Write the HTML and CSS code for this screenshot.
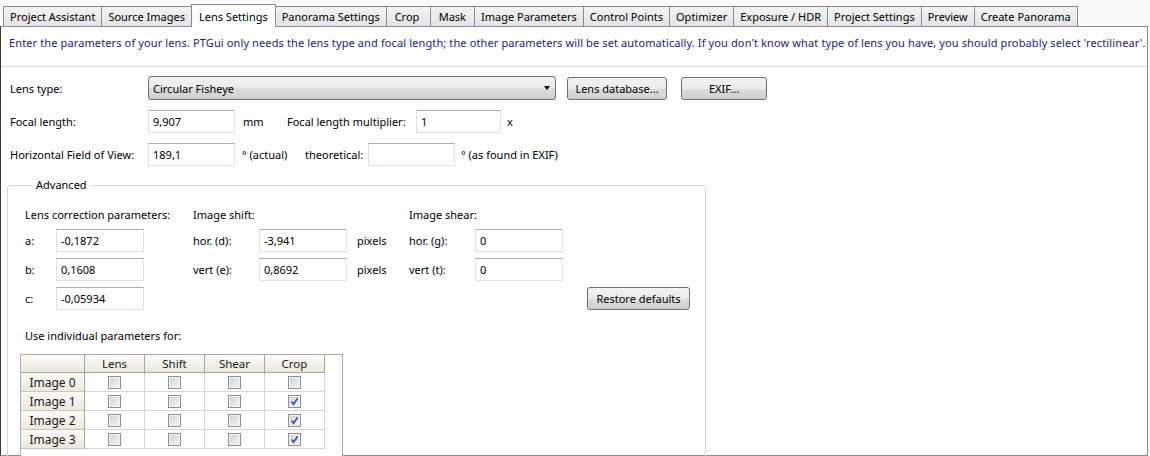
FILE: index.html
```html
<html>
<head>
<meta charset="utf-8">
<link rel="stylesheet" href="styles.css">
</head>
<body>

<div class="tabs">
  <div class="tab">Project Assistant</div>
  <div class="tab">Source Images</div>
  <div class="tab active">Lens Settings</div>
  <div class="tab">Panorama Settings</div>
  <div class="tab small">Crop</div>
  <div class="tab small">Mask</div>
  <div class="tab">Image Parameters</div>
  <div class="tab">Control Points</div>
  <div class="tab">Optimizer</div>
  <div class="tab">Exposure / HDR</div>
  <div class="tab">Project Settings</div>
  <div class="tab">Preview</div>
  <div class="tab">Create Panorama</div>
</div>

<div class="panel">
  <p class="intro">Enter the parameters of your lens. PTGui only needs the lens type and focal length; the other parameters will be set automatically. If you don't know what type of lens you have, you should probably select 'rectilinear'.</p>

  <div class="form">
    <div class="row first">
      <span class="lbl">Lens type:</span>
      <div class="select">
        <span>Circular Fisheye</span>
        <span class="arrow"></span>
      </div>
      <button class="btn lensdb">Lens database...</button>
      <button class="btn exif">EXIF...</button>
    </div>
    <div class="row">
      <span class="lbl">Focal length:</span>
      <input class="field" value="9,907">
      <span class="unit mm">mm</span>
      <span class="multlbl">Focal length multiplier:</span>
      <input class="field short" value="1">
      <span class="unit x">x</span>
    </div>
    <div class="row">
      <span class="lbl">Horizontal Field of View:</span>
      <input class="field" value="189,1">
      <span class="unit actual">° (actual)</span>
      <span class="theolbl">theoretical:</span>
      <input class="field" value="">
      <span class="unit x">° (as found in EXIF)</span>
    </div>
  </div>

  <fieldset class="advanced">
    <legend>Advanced</legend>

    <div class="params">
      <span class="head lenshead">Lens correction parameters:</span>
      <span class="head shifthead">Image shift:</span>
      <span class="head shearhead">Image shear:</span>

      <span>a:</span>
      <input class="field wide" value="-0,1872">
      <span></span>
      <span>hor. (d):</span>
      <input class="field wide" value="-3,941">
      <span class="pix">pixels</span>
      <span>hor. (g):</span>
      <input class="field wide" value="0">
      <span></span>

      <span>b:</span>
      <input class="field wide" value="0,1608">
      <span></span>
      <span>vert (e):</span>
      <input class="field wide" value="0,8692">
      <span class="pix">pixels</span>
      <span>vert (t):</span>
      <input class="field wide" value="0">
      <span></span>

      <span>c:</span>
      <input class="field wide" value="-0,05934">
      <span class="restore-cell"><button class="btn restore">Restore defaults</button></span>
    </div>

    <div class="individual">Use individual parameters for:</div>

    <div class="sheet-box">
      <div class="sheet">
        <div class="hcell corner"></div>
        <div class="hcell">Lens</div>
        <div class="hcell">Shift</div>
        <div class="hcell">Shear</div>
        <div class="hcell">Crop</div>

        <div class="rcell">Image 0</div>
        <div class="cell"><span class="cb"></span></div>
        <div class="cell"><span class="cb"></span></div>
        <div class="cell"><span class="cb"></span></div>
        <div class="cell"><span class="cb"></span></div>

        <div class="rcell">Image 1</div>
        <div class="cell"><span class="cb"></span></div>
        <div class="cell"><span class="cb"></span></div>
        <div class="cell"><span class="cb"></span></div>
        <div class="cell"><span class="cb"><svg width="11" height="11" viewBox="0 0 11 11"><path d="M2.5 5.5 L4.6 8.3 L8.6 2.2" fill="none" stroke="#3d5a9e" stroke-width="1.7"/></svg></span></div>

        <div class="rcell">Image 2</div>
        <div class="cell"><span class="cb"></span></div>
        <div class="cell"><span class="cb"></span></div>
        <div class="cell"><span class="cb"></span></div>
        <div class="cell"><span class="cb"><svg width="11" height="11" viewBox="0 0 11 11"><path d="M2.5 5.5 L4.6 8.3 L8.6 2.2" fill="none" stroke="#3d5a9e" stroke-width="1.7"/></svg></span></div>

        <div class="rcell">Image 3</div>
        <div class="cell"><span class="cb"></span></div>
        <div class="cell"><span class="cb"></span></div>
        <div class="cell"><span class="cb"></span></div>
        <div class="cell"><span class="cb"><svg width="11" height="11" viewBox="0 0 11 11"><path d="M2.5 5.5 L4.6 8.3 L8.6 2.2" fill="none" stroke="#3d5a9e" stroke-width="1.7"/></svg></span></div>
      </div>
    </div>
  </fieldset>
</div>

</body>
</html>
```

FILE: styles.css
```css
* {
  box-sizing: border-box;
}

body {
  margin: 0;
  height: 456px;
  overflow: hidden;
  background: #fafafa;
  font-family: "Noto Sans", "Open Sans", sans-serif;
  font-size: 11px;
  color: #000;
}

/* tab strip */

.tabs {
  display: flex;
  height: 26px;
  padding: 6px 0 0 4px;
}

.tab {
  height: 20px;
  padding: 0 6px;
  margin-left: -1px;
  line-height: 19px;
  white-space: nowrap;
  border: 1px solid #898c95;
  border-bottom: none;
  background: linear-gradient(#f3f3f3, #e4e4e4);
}

.tab.small {
  min-width: 45px;
  padding: 0 8px;
}

.tab.active {
  position: relative;
  z-index: 2;
  height: 23px;
  margin-top: -2px;
  padding: 2px 7px 0 7px;
  background: #fff;
}

/* main panel */

.panel {
  width: 1148px;
  height: 430px;
  background: #fff;
  border: 1px solid #898c95;
  border-left: 1px solid #3a3a3a;
}

.intro {
  margin: 0;
  height: 40px;
  padding: 8px 0 0 8px;
  line-height: 16px;
  letter-spacing: 0.12px;
  color: #22208c;
  white-space: nowrap;
  border-bottom: 1px solid #dadada;
}

.form {
  padding: 9px 0 0 9px;
}

.row {
  display: flex;
  align-items: center;
  height: 23px;
  margin-top: 10px;
}

.row.first {
  height: 24px;
  margin-top: 0;
}

.lbl {
  width: 138px;
}

.select {
  width: 408px;
  height: 24px;
  display: flex;
  align-items: center;
  justify-content: space-between;
  padding: 0 5px 0 4px;
  border: 1px solid #707070;
  border-radius: 3px;
  background: linear-gradient(#f2f2f2 0%, #ebebeb 50%, #dddddd 51%, #cfcfcf 100%);
}

.arrow {
  width: 0;
  height: 0;
  border-top: 4px solid #000;
  border-left: 3.5px solid transparent;
  border-right: 3.5px solid transparent;
}

.btn {
  height: 23px;
  padding: 0;
  font-family: inherit;
  font-size: 11px;
  color: #000;
  border: 1px solid #707070;
  border-radius: 3px;
  background: linear-gradient(#f2f2f2 0%, #ebebeb 50%, #dddddd 51%, #cfcfcf 100%);
}

.lensdb {
  width: 100px;
  margin-left: 11px;
}

.exif {
  width: 86px;
  margin-left: 14px;
}

.field {
  width: 87px;
  height: 23px;
  padding: 0 4px;
  font-family: inherit;
  font-size: 11px;
  color: #000;
  background: #fff;
  border: 1px solid #e2e3ea;
  border-top-color: #abadb3;
  border-left-color: #dbdfe6;
  outline: none;
}

.field.short {
  width: 85px;
}

.field.wide {
  width: 88px;
}

.unit.mm {
  width: 44px;
  margin-left: 8px;
}

.multlbl {
  width: 129px;
}

.unit.x {
  margin-left: 6px;
}

.unit.actual {
  width: 63px;
  margin-left: 7px;
}

.theolbl {
  width: 63px;
}

/* advanced group */

.advanced {
  width: 699px;
  height: 320px;
  margin: 11px 0 0 6px;
  padding: 13px 0 0 17px;
  border: 1px solid #d5d5d5;
  border-radius: 3px;
}

.advanced legend {
  margin-left: 8px;
  padding: 0 3px;
  line-height: 16px;
}

.params {
  display: grid;
  grid-template-columns: 31px 88px 49px 66px 88px 62px 66px 88px 1fr;
  grid-template-rows: 17px 23px 23px 23px;
  row-gap: 6px;
  align-items: center;
}

.params span {
  white-space: nowrap;
}

.lenshead {
  grid-column: 1 / 4;
}

.shifthead {
  grid-column: 4 / 7;
}

.shearhead {
  grid-column: 7 / 10;
}

.pix {
  padding-left: 10px;
}

.restore-cell {
  grid-column: 9;
}

.restore {
  width: 103px;
  margin-left: 24px;
}

.individual {
  margin-top: 18px;
  line-height: 16px;
}

/* per-image grid */

.sheet-box {
  width: 323px;
  height: 120px;
  margin: 10px 0 0 -5px;
  background: #fff;
  border: 1px solid #ababab;
}

.sheet {
  display: grid;
  grid-template-columns: 64px repeat(4, 60px);
  grid-template-rows: 18px repeat(4, 19px);
}

.hcell,
.rcell {
  display: flex;
  align-items: center;
  justify-content: center;
  font-size: 12px;
  font-weight: 400;
  color: #1a1a1a;
  background: linear-gradient(#fcfbf8, #ebe8dd);
  border-right: 1px solid #a6a6a0;
  border-bottom: 1px solid #a6a6a0;
}

.hcell {
  font-size: 11.5px;
}

.rcell {
  border-bottom-color: #c9c7bd;
}

.cell {
  display: flex;
  align-items: center;
  justify-content: center;
  border-right: 1px solid #d6d6d6;
  border-bottom: 1px solid #d6d6d6;
}

.cb {
  width: 13px;
  height: 13px;
  display: flex;
  align-items: center;
  justify-content: center;
  border: 1px solid #8e8f8f;
  box-shadow: inset 0 0 0 1px #f4f4f4;
  background: linear-gradient(135deg, #cfd1d4, #f6f6f6);
}
```
